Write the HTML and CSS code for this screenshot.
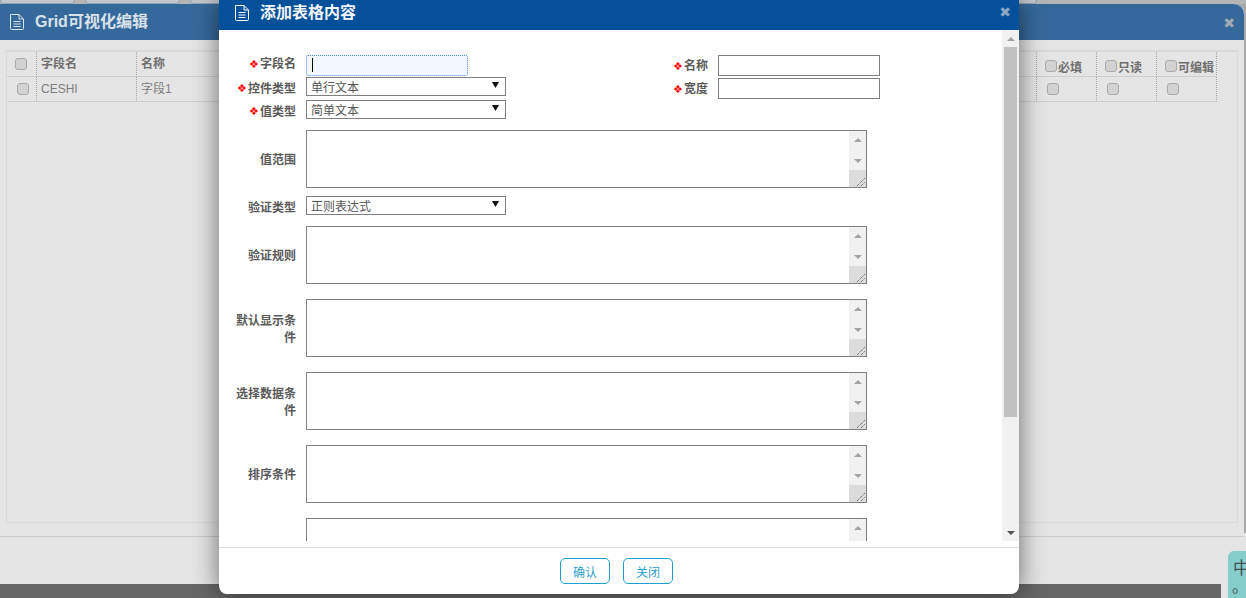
FILE: index.html
```html
<!DOCTYPE html>
<html lang="zh">
<head>
<meta charset="utf-8">
<title>Grid可视化编辑</title>
<link rel="stylesheet" href="styles.css">
</head>
<body>
<div class="page">
  <div class="tabs">
    <span class="tab tab-a"></span><span class="tab tab-b"></span><span class="tab tab-c"></span><span class="tab tab-d"></span>
  </div>
  <section class="win">
    <header class="win-head">
      <svg class="doc" viewBox="0 0 14 16"><path d="M1.500 .5h7.500l4.500 4.500v9.500a1 1 0 0 1-1 1h-11a1 1 0 0 1-1-1v-14a1 1 0 0 1 1-1zM9 .5v4.500h4.500M3.500 7.500h7M3.500 10h7M3.500 12.500h7" fill="none" stroke="currentColor"/></svg>
      <h2 class="win-title">Grid可视化编辑</h2>
      <span class="close win-close">✖</span>
    </header>
    <div class="win-body">
      <div class="panel">
        <div class="grid">
          <div class="cell head"><input type="checkbox" class="chk chk-a"></div>
          <div class="cell head">字段名</div>
          <div class="cell head">名称</div>
          <div class="cell head"></div>
          <div class="cell head flag"><input type="checkbox" class="chk">必填</div>
          <div class="cell head flag"><input type="checkbox" class="chk">只读</div>
          <div class="cell head flag"><input type="checkbox" class="chk">可编辑</div>
          <div class="cell"><input type="checkbox" class="chk chk-b"></div>
          <div class="cell">CESHI</div>
          <div class="cell">字段1</div>
          <div class="cell"></div>
          <div class="cell"><input type="checkbox" class="chk chk-c"></div>
          <div class="cell"><input type="checkbox" class="chk chk-c"></div>
          <div class="cell"><input type="checkbox" class="chk chk-c"></div>
        </div>
      </div>
    </div>
    <div class="win-foot"></div>
  </section>
  <div class="strip"></div>

  <div class="modal">
    <header class="modal-head">
      <svg class="doc" viewBox="0 0 14 16"><path d="M1.500 .5h7.500l4.500 4.500v9.500a1 1 0 0 1-1 1h-11a1 1 0 0 1-1-1v-14a1 1 0 0 1 1-1zM9 .5v4.500h4.500M3.500 7.500h7M3.500 10h7M3.500 12.500h7" fill="none" stroke="currentColor"/></svg>
      <h2 class="modal-title">添加表格内容</h2>
      <span class="close modal-close">✖</span>
    </header>
    <div class="modal-main">
      <div class="modal-body">
        <form class="form">
          <div class="top">
            <div class="col-left">
              <div class="row row-input"><label class="label label-top"><i class="req">❖</i>字段名</label><input class="field focus" type="text"></div>
              <div class="row row-select"><label class="label"><i class="req">❖</i>控件类型</label><select class="sel"><option>单行文本</option></select></div>
              <div class="row row-select gap4"><label class="label"><i class="req">❖</i>值类型</label><select class="sel"><option>简单文本</option></select></div>
            </div>
            <div class="col-right">
              <div class="row row-right"><label class="label"><i class="req">❖</i>名称</label><input class="field" type="text"></div>
              <div class="row row-right"><label class="label"><i class="req">❖</i>宽度</label><input class="field" type="text"></div>
            </div>
          </div>
          <div class="row row-area first"><label class="label">值范围</label><div class="area"><textarea class="area-text"></textarea><div class="sb"><span class="sb-up"></span><span class="sb-down"></span><span class="sb-corner"></span></div></div></div>
          <div class="row row-select sel-row"><label class="label">验证类型</label><select class="sel"><option>正则表达式</option></select></div>
          <div class="row row-area first"><label class="label">验证规则</label><div class="area"><textarea class="area-text"></textarea><div class="sb"><span class="sb-up"></span><span class="sb-down"></span><span class="sb-corner"></span></div></div></div>
          <div class="row row-area"><label class="label">默认显示条件</label><div class="area"><textarea class="area-text"></textarea><div class="sb"><span class="sb-up"></span><span class="sb-down"></span><span class="sb-corner"></span></div></div></div>
          <div class="row row-area"><label class="label">选择数据条件</label><div class="area"><textarea class="area-text"></textarea><div class="sb"><span class="sb-up"></span><span class="sb-down"></span><span class="sb-corner"></span></div></div></div>
          <div class="row row-area"><label class="label">排序条件</label><div class="area"><textarea class="area-text"></textarea><div class="sb"><span class="sb-up"></span><span class="sb-down"></span><span class="sb-corner"></span></div></div></div>
          <div class="row row-area"><label class="label"></label><div class="area"><textarea class="area-text"></textarea><div class="sb"><span class="sb-up"></span><span class="sb-down"></span><span class="sb-corner"></span></div></div></div>
        </form>
      </div>
      <div class="vbar">
        <span class="vbar-btn"><span class="sb-up"></span></span>
        <span class="vbar-thumb"></span>
        <span class="vbar-rest"></span>
        <span class="vbar-btn"><span class="sb-down dark"></span></span>
      </div>
    </div>
    <footer class="modal-foot">
      <button class="btn" type="button">确认</button>
      <button class="btn" type="button">关闭</button>
    </footer>
  </div>

  <div class="ime"><span class="ime-a">中</span><span class="ime-b">。,</span></div>
</div>
</body>
</html>
```
FILE: styles.css
```css
* { box-sizing: border-box; }
html, body { margin: 0; padding: 0; }
body {
  font-family: "Liberation Sans", "Noto Sans CJK SC", sans-serif;
  font-size: 12px;
  color: #555;
  overflow: hidden;
}
.page {
  position: relative;
  width: 1246px;
  height: 598px;
  overflow: hidden;
  display: flex;
  flex-direction: column;
  background: linear-gradient(#a9a9a9 0 533px, #e5e5e5 533px);
}
.tabs { height: 4px; display: flex; gap: 10px; overflow: hidden; background: #b5b5b5; flex: none; }
.tab { height: 4px; background: #c2c6cb; border: 1px solid #8fa6b8; border-top: 0; border-radius: 0 0 4px 4px; flex: none; }
.tab-a { width: 75px; }
.tab-b { width: 95px; }
.tab-c { width: 100px; }
.tab-d { width: 737px; }

.win {
  width: 1244px;
  height: 580px;
  flex: none;
  display: flex;
  flex-direction: column;
  background: #e5e5e5;
  border-radius: 0 10px 0 0;
  overflow: hidden;
}
.win-head {
  height: 36px;
  flex: none;
  display: flex;
  align-items: center;
  padding: 0 9px 0 10px;
  background: #36699b;
  color: #d9e1e9;
}
.doc { width: 14px; height: 16px; flex: none; }
.win-title { margin: 0 0 0 11px; font-size: 16px; line-height: 36px; font-weight: 700; color: #d9e1e9; flex: 1; }
.close { font-family: "DejaVu Sans", sans-serif; font-size: 14px; line-height: 14px; }
.win-close { color: #a3a9b0; margin-top: 1px; }
.win-body { height: 497px; flex: none; padding: 10px 6px 0; border-bottom: 1px solid #cbcbcb; }
.panel { height: 473px; width: 1232px; border: 1px solid #d9d9d9; border-top-width: 2px; }
.grid {
  display: grid;
  grid-template-columns: 30px 100px 100px 800px 60px 60px 60px;
  grid-auto-rows: 25px;
  color: #7d7d7d;
}
.cell {
  display: flex;
  align-items: center;
  padding-left: 4px;
  border-right: 1px dotted #a5a5a5;
  border-bottom: 1px solid #cfcfcf;
  line-height: 24px;
}
.head { font-weight: 700; color: #707070; }
.flag { padding-left: 8px; padding-top: 8px; }
.flag .chk { margin-top: -5px; margin-right: 1px; }
.chk {
  appearance: none;
  -webkit-appearance: none;
  width: 12px;
  height: 12px;
  margin: 0;
  flex: none;
  background: #d2d2d2;
  border: 1px solid #a9a9a9;
  border-radius: 3px;
}
.chk-a { margin-left: 4px; margin-top: -1px; }
.chk-b { margin-left: 6px; }
.chk-c { margin-left: 6px; }
.win-foot { flex: 1; }
.strip { width: 1221px; height: 14px; flex: none; background: #666; }

.modal {
  position: absolute;
  left: 219px;
  top: 0;
  width: 800px;
  height: 594px;
  display: flex;
  flex-direction: column;
  background: #fff;
  border-radius: 0 0 8px 8px;
  box-shadow: 0 0 26px rgba(0, 0, 0, .55);
}
.modal-head {
  height: 30px;
  flex: none;
  display: flex;
  align-items: center;
  padding: 0 8px 0 16px;
  background: #04509a;
  color: #fff;
}
.modal-head .doc { margin-top: -4px; }
.modal-title { margin: -4px 0 0 11px; font-size: 16px; line-height: 22px; font-weight: 700; color: #f2f5f9; flex: 1; }
.modal-close { color: #8ea6c4; margin-top: -6px; }
.modal-main { height: 511px; flex: none; display: flex; }
.modal-body { flex: 1; min-width: 0; overflow: hidden; }
.vbar { width: 17px; flex: none; display: flex; flex-direction: column; background: #f1f1f1; }
.vbar-btn { height: 17px; flex: none; display: flex; align-items: center; justify-content: center; }
.vbar-thumb { height: 370px; flex: none; margin: 0 2px; background: #c1c1c1; }
.vbar-rest { flex: 1; }
.sb-up, .sb-down { display: block; width: 0; height: 0; border-left: 4px solid transparent; border-right: 4px solid transparent; }
.sb-up { border-bottom: 4px solid #a3a3a3; }
.sb-down { border-top: 4px solid #a3a3a3; }
.sb-down.dark { border-top-color: #505050; }

.form { height: 659px; padding: 25px 0 0 17px; }
.top { display: flex; }
.col-left { width: 412px; }
.col-right { display: flex; flex-direction: column; gap: 2px; }
.row { display: flex; color: #555; }
.label {
  width: 60px;
  flex: none;
  margin-right: 10px;
  text-align: right;
  font-weight: 700;
  line-height: 17px;
  color: #5a5a5a;
}
.req { font-family: "DejaVu Sans", sans-serif; font-style: normal; font-weight: 400; font-size: 11px; line-height: 12px; padding-right: 1px; color: #f00; }
.row-input { height: 22px; }
.label-top { padding-top: 1px; }
.row-select { height: 19px; }
.row-select .label { padding-top: 5px; line-height: 15px; white-space: nowrap; display: flex; justify-content: flex-end; align-items: center; }
.gap4 { margin-top: 4px; }
.row-right { height: 21px; align-items: center; }
.row-right .label { padding-top: 2px; }
.field { width: 162px; height: 21px; margin: 0; padding: 0 4px; border: 1px solid #808080; background: #fff; outline: 0; }
.focus {
  border: 1px dotted #4f86ea;
  border-radius: 2px;
  background: linear-gradient(#000, #000) 5px 2px / 1px 14px no-repeat, #f0f7ff;
}
.sel {
  appearance: none;
  -webkit-appearance: none;
  width: 200px;
  height: 19px;
  margin: 0;
  padding: 3px 0 0 4px;
  border: 1px solid #808080;
  border-radius: 0;
  font: inherit;
  line-height: 14px;
  color: #555;
  background: #fff url("data:image/svg+xml,%3Csvg xmlns='http://www.w3.org/2000/svg' width='7' height='7'%3E%3Cpath d='M0 1h7L3.500 7z' fill='%23111'/%3E%3C/svg%3E") no-repeat 185px 3px;
}
.row-area { height: 58px; margin-top: 15px; align-items: center; }
.row-area.first { margin-top: 11px; }
.row-area .label { padding-top: 3px; }
.sel-row { margin-top: 8px; }
.area {
  display: flex;
  width: 561px;
  height: 58px;
  border: 1px solid #808080;
  background: #fff;
}
.area-text {
  flex: 1;
  min-width: 0;
  margin: 0;
  padding: 2px;
  border: 0;
  outline: 0;
  resize: none;
  background: #fff;
  font: inherit;
}
.sb { width: 17px; flex: none; display: flex; flex-direction: column; align-items: center; background: #f1f1f1; }
.sb .sb-up { margin-top: 7px; }
.sb .sb-down { margin-top: 17px; }
.sb-corner {
  margin-top: auto;
  width: 17px;
  height: 17px;
  background: #dcdcdc url("data:image/svg+xml,%3Csvg xmlns='http://www.w3.org/2000/svg' width='17' height='17'%3E%3Cpath d='M8 16L16 8M12 16l4-4' stroke='%23444' stroke-dasharray='1 1' fill='none'/%3E%3C/svg%3E");
}
.modal-foot {
  margin-top: 6px;
  flex: 1;
  border-top: 1px solid #ddd;
  display: flex;
  justify-content: center;
  gap: 13px;
  padding: 10px 5px 0 0;
}
.btn {
  width: 50px;
  height: 26px;
  padding: 0;
  background: #fff;
  border: 1px solid #1c9fd3;
  border-radius: 5px;
  font: inherit;
  color: #2d9fce;
}
.ime {
  position: absolute;
  left: 1228px;
  top: 551px;
  width: 18px;
  height: 47px;
  padding: 8px 0 0 5px;
  display: flex;
  flex-direction: column;
  background: #85cdcb;
  border-radius: 6px 0 0 0;
  color: #444b52;
}
.ime-a { font-size: 17px; line-height: 20px; white-space: nowrap; }
.ime-b { font-size: 16px; line-height: 16px; margin-left: -1px; white-space: nowrap; }
```
